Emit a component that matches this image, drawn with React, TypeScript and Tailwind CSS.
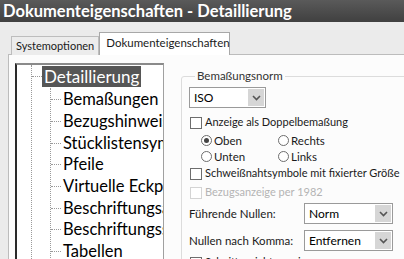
const CHILDREN = [
  'Bemaßungen',
  'Bezugshinweissymbole',
  'Stücklistensymbole',
  'Pfeile',
  'Virtuelle Eckpunkte',
  'Beschriftungsanzeige',
  'Beschriftungsschriftart',
  'Tabellen',
];

function Chevron() {
  return (
    <svg width="9" height="6" viewBox="0 0 9 6" className="text-[#555]">
      <path d="M1 1 L4.5 4.5 L8 1" fill="none" stroke="currentColor" strokeWidth="1.6" />
    </svg>
  );
}

function Select({ value, width }: { value: string; width: string }) {
  return (
    <div className={`flex h-[21px] ${width} items-stretch border border-[#9a9a9a] bg-white`}>
      <span className="flex-1 pl-[4px] leading-[19px] text-[12px] text-black">{value}</span>
      <span className="m-[1px] flex w-[16px] items-center justify-center bg-[#d6d6d6]">
        <Chevron />
      </span>
    </div>
  );
}

function CheckBox({ label, disabled = false }: { label: string; disabled?: boolean }) {
  return (
    <div className="flex h-[19px] items-center gap-[3px] whitespace-nowrap">
      <span
        className={`h-[12px] w-[12px] shrink-0 border ${disabled ? 'border-[#d4d4d4]' : 'border-[#6d6d6d]'} bg-white`}
      />
      <span className={`text-[11px] ${disabled ? 'text-[#b4b4b4]' : 'text-[#1a1a1a]'}`}>{label}</span>
    </div>
  );
}

function Radio({ label, checked = false }: { label: string; checked?: boolean }) {
  return (
    <div className="flex w-[77px] items-center gap-[2px]">
      <span className="flex h-[11px] w-[11px] shrink-0 items-center justify-center rounded-full border border-[#6d6d6d] bg-white">
        {checked && <span className="h-[5px] w-[5px] rounded-full bg-[#444]" />}
      </span>
      <span className="text-[11.5px] leading-[15px] text-[#1a1a1a]">{label}</span>
    </div>
  );
}

export default function App() {
  return (
    <div
      className="h-[259px] w-[404px] overflow-hidden bg-[#ebebeb]"
      style={{ fontFamily: 'Lato, "Liberation Sans", sans-serif' }}
    >
      {/* Title bar */}
      <div className="flex h-[22px] items-center bg-gradient-to-b from-[#5a5a5a] to-[#404040] pl-[3px]">
        <span className="whitespace-nowrap text-[16.5px] font-bold text-white">
          Dokumenteigenschaften - Detaillierung
        </span>
      </div>

      {/* Tabs */}
      <div className="flex h-[32px] items-end pl-[11px]">
        <div className="mb-[-1px] flex h-[19px] items-center whitespace-nowrap border border-b-0 border-[#bdbdbd] bg-[#ececec] px-[4px] text-[11px] text-[#1a1a1a]">
          Systemoptionen
        </div>
        <div className="relative z-10 mb-[-1px] flex h-[23px] w-[131px] items-center whitespace-nowrap border border-b-0 border-[#a8a8a8] bg-white px-[6px] pb-[2px] text-[11.5px] text-[#1a1a1a]">
          Dokumenteigenschaften
        </div>
      </div>

      {/* Tab panel */}
      <div className="ml-[8px] flex h-[300px] overflow-hidden border-l border-t border-[#bcbcbc] bg-[#fcfcfc]">
        {/* Tree */}
        <div className="ml-[6px] mt-[8px] h-[300px] w-[149px] shrink-0 overflow-hidden border-l-2 border-t-2 border-r border-l-[#2a2a2a] border-t-[#8a8a8a] border-r-[#a0a0a0] bg-white">
          <div className="ml-[14px] h-full border-l border-dotted border-[#9a9a9a]">
            <div className="flex h-[22px] items-center">
              <span className="w-[10px] shrink-0 border-t border-dotted border-[#9a9a9a]" />
              <span className="bg-[#565656] px-[2px] text-[17px] leading-[21px] text-white">Detaillierung</span>
            </div>
            <div className="ml-[18px] mt-[1px] h-full border-l border-dotted border-[#9a9a9a] pt-[1px]">
              {CHILDREN.map((c) => (
                <div key={c} className="flex h-[21.7px] items-center whitespace-nowrap">
                  <span className="w-[10px] shrink-0 border-t border-dotted border-[#9a9a9a]" />
                  <span className="ml-[2px] text-[16.5px] leading-[21px] text-black">{c}</span>
                </div>
              ))}
            </div>
          </div>
        </div>

        {/* Right column */}
        <fieldset className="ml-[17px] mt-[14px] h-[300px] w-[232px] shrink-0 rounded-[3px] border border-[#dcdcdc] pl-[7px] pt-[4px]">
          <legend className="ml-[6px] px-[2px] text-[11.5px] leading-[14px] text-[#333]">Bemaßungsnorm</legend>
          <div>
            <Select value="ISO" width="w-[77px]" />
          </div>
          <div className="mt-[5px] pl-[1px]">
            <CheckBox label="Anzeige als Doppelbemaßung" />
          </div>
          <div className="mt-[1px] flex flex-col gap-[1px] pl-[12px]">
            <div className="flex">
              <Radio label="Oben" checked />
              <Radio label="Rechts" />
            </div>
            <div className="flex">
              <Radio label="Unten" />
              <Radio label="Links" />
            </div>
          </div>
          <div className="mt-[0px] pl-[1px]">
            <CheckBox label="Schweißnahtsymbole mit fixierter Größe" />
            <CheckBox label="Bezugsanzeige per 1982" disabled />
          </div>
          <div className="mt-[1px] flex items-center">
            <span className="w-[115px] whitespace-nowrap text-[11.5px] text-[#1a1a1a]">Führende Nullen:</span>
            <Select value="Norm" width="w-[89px]" />
          </div>
          <div className="mt-[6px] flex items-center">
            <span className="w-[115px] whitespace-nowrap text-[11.5px] text-[#1a1a1a]">Nullen nach Komma:</span>
            <Select value="Entfernen" width="w-[89px]" />
          </div>
          <div className="mt-[2px] pl-[1px]">
            <CheckBox label="Schnittansicht anzeigen" />
          </div>
        </fieldset>
      </div>
    </div>
  );
}
